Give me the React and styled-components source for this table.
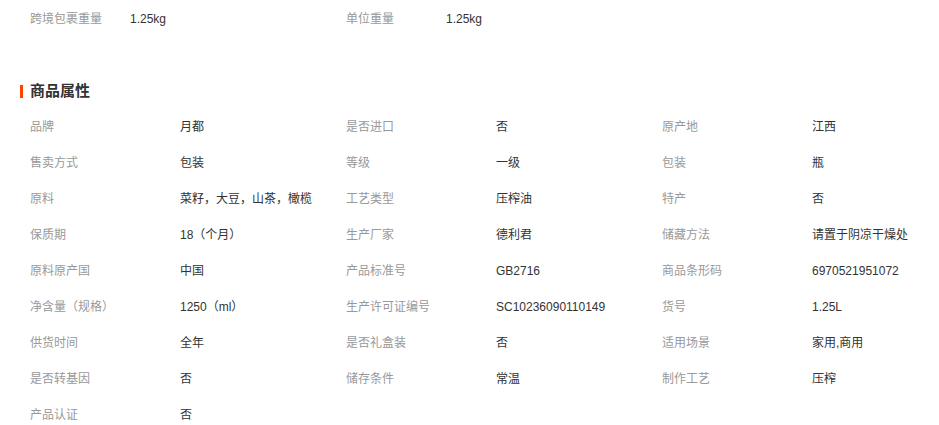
import React from "react";
import styled, { createGlobalStyle } from "styled-components";

const GlobalStyle = createGlobalStyle`
  body {
    margin: 0;
    background: #fff;
    font-family: "Liberation Sans", "Noto Sans CJK SC", sans-serif;
    font-size: 12px;
  }
`;

const topInfo = [
  { label: "跨境包裹重量", value: "1.25kg" },
  { label: "单位重量", value: "1.25kg" },
];

const attrs = [
  ["品牌", "月都"], ["是否进口", "否"], ["原产地", "江西"],
  ["售卖方式", "包装"], ["等级", "一级"], ["包装", "瓶"],
  ["原料", "菜籽，大豆，山茶，橄榄"], ["工艺类型", "压榨油"], ["特产", "否"],
  ["保质期", "18（个月）"], ["生产厂家", "德利君"], ["储藏方法", "请置于阴凉干燥处"],
  ["原料原产国", "中国"], ["产品标准号", "GB2716"], ["商品条形码", "6970521951072"],
  ["净含量（规格）", "1250（ml）"], ["生产许可证编号", "SC10236090110149"], ["货号", "1.25L"],
  ["供货时间", "全年"], ["是否礼盒装", "否"], ["适用场景", "家用,商用"],
  ["是否转基因", "否"], ["储存条件", "常温"], ["制作工艺", "压榨"],
  ["产品认证", "否"],
];

export default function App() {
  return (
    <Page>
      <GlobalStyle />
      <TopRow>
        {topInfo.map((item) => (
          <TopGroup key={item.label}>
            <TopLabel>{item.label}</TopLabel>
            <Value>{item.value}</Value>
          </TopGroup>
        ))}
      </TopRow>
      <Heading>
        <Bar />
        <HeadingText>商品属性</HeadingText>
      </Heading>
      <AttrGrid>
        {attrs.map(([label, value]) => (
          <React.Fragment key={label}>
            <Label>{label}</Label>
            <Value>{value}</Value>
          </React.Fragment>
        ))}
      </AttrGrid>
    </Page>
  );
}

const Page = styled.div`
  width: 939px;
  padding-bottom: 4px;
`;

const TopRow = styled.div`
  display: flex;
  height: 38px;
  align-items: center;
  padding-left: 30px;
`;

const TopGroup = styled.div`
  display: flex;
  width: 316px;
`;

const TopLabel = styled.span`
  width: 100px;
  color: #999;
  line-height: 16px;
`;

const Heading = styled.div`
  display: flex;
  align-items: center;
  height: 20px;
  margin-top: 43px;
  padding-left: 20px;
`;

const Bar = styled.span`
  width: 3px;
  height: 13px;
  background: #ff4400;
  margin-right: 7px;
`;

const HeadingText = styled.h2`
  margin: 0;
  font-size: 15px;
  font-weight: bold;
  color: #333;
  line-height: 20px;
`;

const AttrGrid = styled.div`
  display: grid;
  grid-template-columns: 150px 166px 150px 166px 150px 1fr;
  grid-auto-rows: 36px;
  align-items: center;
  margin-top: 8px;
  padding-left: 30px;
`;

const Label = styled.span`
  color: #999;
  line-height: 16px;
`;

const Value = styled.span`
  color: #333;
  line-height: 16px;
`;
